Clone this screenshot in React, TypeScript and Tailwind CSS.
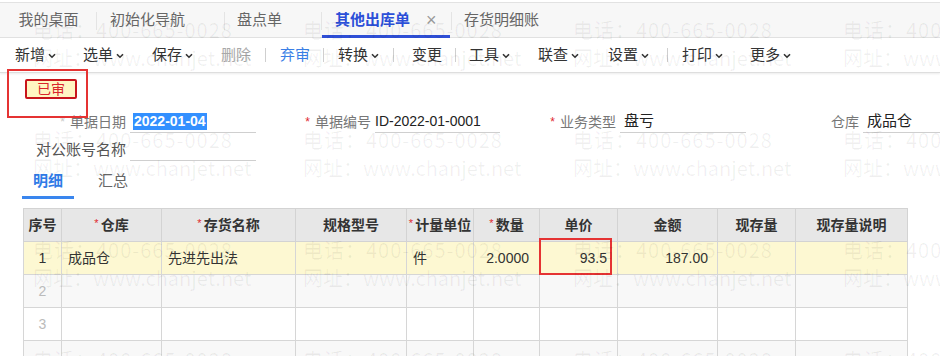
import React from 'react';

const font = 'font-["Liberation_Sans","Noto_Sans_CJK_SC",sans-serif]';

interface TabItem {
  label: string;
  cls: string;
  active?: boolean;
}

const tabs: TabItem[] = [
  { label: '我的桌面', cls: 'w-[97px] justify-center' },
  { label: '初始化导航', cls: 'w-[128px] pl-[13px]' },
  { label: '盘点单', cls: 'w-[97px] pl-[12px]' },
  { label: '其他出库单', cls: 'w-[130px] pl-[13px]', active: true },
  { label: '存货明细账', cls: 'w-[120px] pl-[12px]' },
];

interface ToolItem {
  label?: string;
  chev?: boolean;
  sep?: boolean;
  cls: string;
  tone?: 'muted' | 'blue';
}

const tools: ToolItem[] = [
  { label: '新增', chev: true, cls: 'w-[68px]' },
  { label: '选单', chev: true, cls: 'w-[69px]' },
  { label: '保存', chev: true, cls: 'w-[69px]' },
  { label: '删除', cls: 'w-[44px]', tone: 'muted' },
  { sep: true, cls: 'w-[15px]' },
  { label: '弃审', cls: 'w-[43px]', tone: 'blue' },
  { sep: true, cls: 'w-[15px]' },
  { label: '转换', chev: true, cls: 'w-[55px]' },
  { sep: true, cls: 'w-[19px]' },
  { label: '变更', cls: 'w-[43px]' },
  { sep: true, cls: 'w-[14px]' },
  { label: '工具', chev: true, cls: 'w-[69px]' },
  { label: '联查', chev: true, cls: 'w-[70px]' },
  { label: '设置', chev: true, cls: 'w-[59px]' },
  { sep: true, cls: 'w-[15px]' },
  { label: '打印', chev: true, cls: 'w-[68px]' },
  { label: '更多', chev: true, cls: 'w-[68px]' },
];

const columns = [
  { title: '序号', w: 'w-[38px]' },
  { title: '仓库', w: 'w-[100px]', req: true },
  { title: '存货名称', w: 'w-[134px]', req: true },
  { title: '规格型号', w: 'w-[111px]' },
  { title: '计量单位', w: 'w-[67px]', req: true },
  { title: '数量', w: 'w-[66px]', req: true },
  { title: '单价', w: 'w-[78px]' },
  { title: '金额', w: 'w-[100px]' },
  { title: '现存量', w: 'w-[78px]' },
  { title: '现存量说明', w: 'w-[112px]' },
];

// last row is only partly in view, its number falls below the fold
const rows = [
  { id: 1, no: '1', wh: '成品仓', name: '先进先出法', unit: '件', qty: '2.0000', price: '93.5', amount: '187.00' },
  { id: 2, no: '2' },
  { id: 3, no: '3' },
  { id: 4, no: '' },
];

function Chevron() {
  return (
    <svg width="8" height="6" viewBox="0 0 8 6" className="ml-[3px] mt-[1px]">
      <path d="M1 1.2l3 3 3-3" fill="none" stroke="#333" strokeWidth="1.6" />
    </svg>
  );
}

function Watermark() {
  const cells = Array.from({ length: 16 });
  return (
    <div className="pointer-events-none absolute inset-0 grid grid-cols-[repeat(4,270px)] auto-rows-[110px] pl-[33px] pt-[16px] font-['Noto_Sans_CJK_SC',sans-serif] text-[20px] leading-[28px] tracking-[1px] text-black/[0.06]">
      {cells.map((_, i) => (
        <div key={i} className="whitespace-nowrap">
          <div>电话：400-665-0028</div>
          <div className="tracking-normal">网址：www.chanjet.net</div>
        </div>
      ))}
    </div>
  );
}

export default function App() {
  return (
    <div className={`relative h-[356px] w-[940px] overflow-hidden bg-white text-[14px] text-[#333] ${font}`}>
      {/* tab strip */}
      <div className="pt-[2px]">
        <div className="flex h-[36px] items-stretch border-t border-b border-[#e2e2e2] bg-[#f7f7f7] text-[15px] text-[#666]">
          {tabs.map((t, i) => (
            <div key={t.label} className={`relative flex items-center ${t.cls}`}>
              <span className={t.active ? 'font-bold text-[#2b4fd8]' : ''}>{t.label}</span>
              {t.active && <span className="ml-[16px] text-[18px] font-light text-[#999]">×</span>}
              {t.active && <div className="absolute bottom-[-1px] left-0 right-[2px] h-[3px] bg-[#2f4fd6]" />}
              {i < tabs.length - 1 && <div className="absolute right-0 top-[9px] h-[18px] w-px bg-[#e4e4e4]" />}
            </div>
          ))}
        </div>
      </div>

      {/* toolbar */}
      <div className="flex h-[35px] items-center border-b border-[#dedede] pl-[15px] text-[15px] shadow-[0_1px_2px_rgba(0,0,0,0.08)]">
        {tools.map((t, i) =>
          t.sep ? (
            <div key={i} className={`flex items-center ${t.cls}`}>
              <div className="h-[14px] w-px bg-[#cfcfcf]" />
            </div>
          ) : (
            <div
              key={i}
              className={`flex items-center ${t.cls} ${
                t.tone === 'muted' ? 'text-[#a8a8a8]' : t.tone === 'blue' ? 'text-[#3a7fe6]' : 'text-[#333]'
              }`}
            >
              <span>{t.label}</span>
              {t.chev && <Chevron />}
            </div>
          )
        )}
      </div>

      {/* status stamp */}
      <div className="pl-[25px] pt-[6px]">
        <div className="flex h-[20px] w-[52px] items-center justify-center rounded-[2px] border-2 border-[#c8151b] bg-[#fff6c2] text-[14px] text-[#d8262c]">
          已审
        </div>
      </div>

      {/* header fields */}
      <div className="mt-[12px] flex h-[22px] items-stretch">
        <div className="flex w-[126px] items-center justify-end text-[#777]">
          <span className="mr-[5px] text-[12px] text-[#c9c9c9]">*</span>
          单据日期
        </div>
        <div className="ml-[4px] flex w-[126px] items-center border-b border-[#cfcfcf] pl-[3px]">
          <span className="bg-[#3390ff] px-[1px] font-bold leading-[17px] text-white">2022-01-04</span>
        </div>
        <div className="flex w-[115px] items-center justify-end text-[#777]">
          <span className="mr-[5px] text-[12px] text-[#e0282f]">*</span>
          单据编号
        </div>
        <div className="ml-[4px] flex w-[125px] items-center border-b border-[#cfcfcf] text-[#222]">ID-2022-01-0001</div>
        <div className="flex w-[116px] items-center justify-end text-[#777]">
          <span className="mr-[5px] text-[12px] text-[#e0282f]">*</span>
          业务类型
        </div>
        <div className="ml-[4px] flex w-[126px] items-center border-b border-[#cfcfcf] pl-[4px] text-[15px] text-[#222]">盘亏</div>
        <div className="flex w-[113px] items-center justify-end text-[#777]">仓库</div>
        <div className="ml-[4px] flex flex-1 items-center border-b border-[#cfcfcf] pl-[4px] text-[15px] text-[#222]">成品仓</div>
      </div>
      <div className="mt-[6px] flex h-[22px] items-stretch">
        <div className="flex w-[126px] items-center justify-end text-[15px] text-[#555]">对公账号名称</div>
        <div className="ml-[4px] w-[126px] border-b border-[#cfcfcf]" />
      </div>

      {/* detail tabs */}
      <div className="mt-[6px] flex h-[32px] pl-[22px] text-[15px]">
        <div className="flex w-[52px] flex-col items-center justify-end">
          <span className="font-bold text-[#2f7be6]">明细</span>
          <div className="mt-[4px] h-[3px] w-full bg-[#3a86ee]" />
        </div>
        <div className="ml-[12px] flex w-[54px] flex-col items-center justify-end">
          <span className="text-[#666]">汇总</span>
          <div className="mt-[4px] h-[3px]" />
        </div>
      </div>

      {/* grid */}
      <div className="relative ml-[23px] mt-[9px] w-[884px]">
        <table className="w-[884px] table-fixed border-collapse">
          <colgroup>
            {columns.map((c) => (
              <col key={c.title} className={c.w} />
            ))}
          </colgroup>
          <thead>
            <tr className="h-[33px] bg-[#e7e7e7]">
              {columns.map((c) => (
                <th key={c.title} className="border border-[#d3d3d3] p-0 text-center font-bold text-[#333]">
                  {c.req && <span className="relative top-[-3px] mr-[2px] text-[11px] font-normal text-[#e0282f]">*</span>}
                  {c.title}
                </th>
              ))}
            </tr>
          </thead>
          <tbody>
            {rows.map((r, i) => (
              <tr key={r.id} className={`h-[33px] ${i === 0 ? 'bg-[#fdf8d2]' : i % 2 === 1 ? 'bg-[#f8f8f8]' : 'bg-white'}`}>
                <td className={`border border-[#d6d6d6] p-0 text-center ${i === 0 ? 'text-[#333]' : 'text-[#bbb]'}`}>{r.no}</td>
                <td className="border border-[#d6d6d6] px-[6px]">{r.wh}</td>
                <td className="border border-[#d6d6d6] px-[6px]">{r.name}</td>
                <td className="border border-[#d6d6d6] px-[6px]" />
                <td className="border border-[#d6d6d6] px-[6px]">{r.unit}</td>
                <td className="border border-[#d6d6d6] pr-[10px] text-right">{r.qty}</td>
                <td className="border border-[#d6d6d6] pr-[10px] text-right">{r.price}</td>
                <td className="border border-[#d6d6d6] pr-[9px] text-right">{r.amount}</td>
                <td className="border border-[#d6d6d6]" />
                <td className="border border-[#d6d6d6]" />
              </tr>
            ))}
          </tbody>
        </table>
        {/* highlight on the unit price cell */}
        <div className="absolute left-[516px] top-[30px] h-[37px] w-[73px] border-2 border-[#e53333]" />
      </div>

      <Watermark />

      {/* highlight around the status stamp */}
      <div className="absolute left-[7px] top-[69px] h-[49px] w-[81px] border-2 border-[#e53333]" />
    </div>
  );
}
